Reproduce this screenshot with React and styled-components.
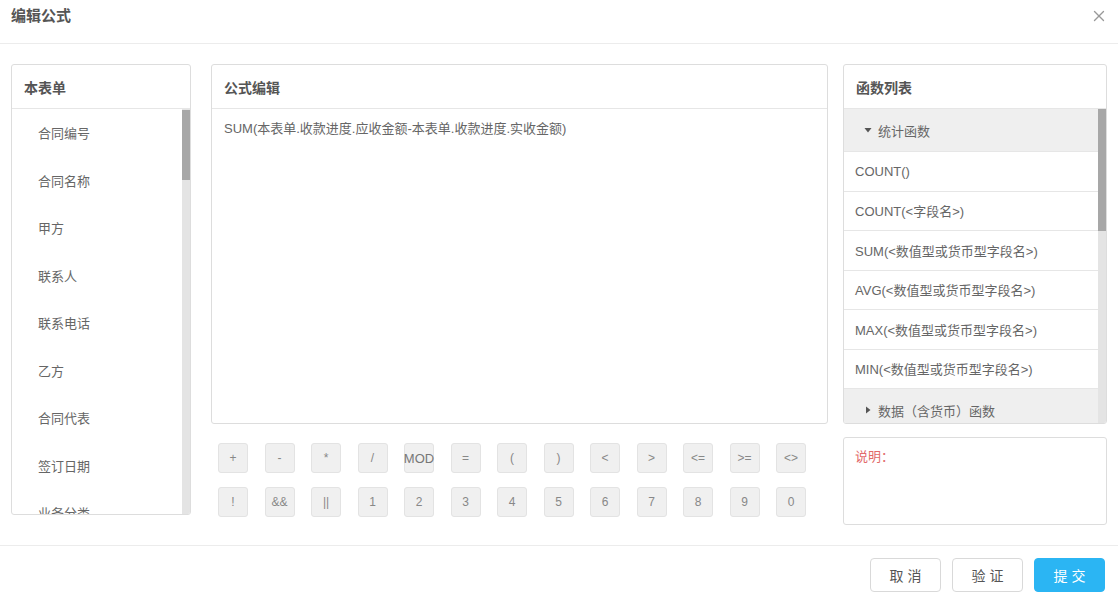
import React from 'react';
import styled, { createGlobalStyle } from 'styled-components';
import { X } from 'lucide-react';

const GlobalStyle = createGlobalStyle`
  html, body {
    margin: 0;
    padding: 0;
    background: #fff;
  }
  body {
    font-family: "Liberation Sans", "Noto Sans CJK SC", sans-serif;
    color: #666;
  }
  * {
    box-sizing: border-box;
  }
`;

const Dialog = styled.div`
  width: 1118px;
  height: 597px;
  display: flex;
  flex-direction: column;
  background: #fff;
  overflow: hidden;
`;

const Header = styled.div`
  height: 44px;
  flex-shrink: 0;
  display: flex;
  justify-content: space-between;
  align-items: flex-start;
  padding: 6px 10px 0 11px;
  border-bottom: 1px solid #ececec;
`;

const Title = styled.h1`
  margin: 0;
  font-size: 15px;
  line-height: 20px;
  font-weight: bold;
  color: #555;
`;

const CloseBtn = styled.button`
  border: none;
  background: none;
  padding: 0;
  margin-top: 1px;
  color: #999;
  cursor: pointer;
  display: flex;
`;

const Body = styled.div`
  flex: 1;
  display: flex;
  gap: 20px;
  padding: 20px 11px 20px 11px;
  border-bottom: 1px solid #ececec;
`;

const Panel = styled.div`
  border: 1px solid #ddd;
  border-radius: 3px;
  background: #fff;
  display: flex;
  flex-direction: column;
  overflow: hidden;
  width: ${p => p.$width || 'auto'};
  height: ${p => p.$height};
  flex-shrink: 0;
`;

const PanelHead = styled.div`
  height: 44px;
  flex-shrink: 0;
  display: flex;
  align-items: center;
  padding: 0 12px;
  font-size: 14px;
  font-weight: bold;
  color: #555;
  border-bottom: 1px solid #e6e6e6;
`;

const ScrollArea = styled.div`
  flex: 1;
  min-height: 0;
  display: flex;
`;

const ListBody = styled.div`
  flex: 1;
  min-width: 0;
  overflow: hidden;
`;

const Track = styled.div`
  width: 8px;
  flex-shrink: 0;
  background: #e4e4e4;
  padding-top: ${p => p.$offset || 0}px;
`;

const Thumb = styled.div`
  width: 100%;
  background: #a7a7a7;
`;

const FieldItem = styled.div`
  height: 47.5px;
  display: flex;
  align-items: center;
  padding-left: 26px;
  font-size: 13px;
  color: #666;
  white-space: nowrap;
`;

const Middle = styled.div`
  width: 617px;
  flex-shrink: 0;
  display: flex;
  flex-direction: column;
  margin-right: -5px;
`;

const FormulaText = styled.div`
  padding: 11px 12px;
  font-size: 13px;
  line-height: 18px;
  color: #666;
`;

const Keypad = styled.div`
  display: grid;
  grid-template-columns: repeat(13, 30px);
  column-gap: 16.5px;
  row-gap: 14px;
  padding: 19px 0 0 7px;
`;

const Key = styled.button`
  width: 30px;
  height: 30px;
  padding: 0;
  border: 1px solid #e3e3e3;
  border-radius: 3px;
  background: #f0f0f0;
  color: ${p => (p.$wide ? '#777' : '#888')};
  font-family: "Liberation Sans", sans-serif;
  font-size: ${p => (p.$wide ? '13px' : '12px')};
  white-space: nowrap;
  overflow: visible;
  display: flex;
  align-items: center;
  justify-content: center;
  cursor: pointer;
`;

const Right = styled.div`
  width: 264px;
  flex-shrink: 0;
  display: flex;
  flex-direction: column;
  gap: 13px;
`;

const GroupHead = styled.div`
  height: 43px;
  display: flex;
  align-items: center;
  gap: 6px;
  padding-left: 20px;
  background: #efefef;
  font-size: 13px;
  color: #666;
  border-bottom: 1px solid #e6e6e6;
`;

const FuncItem = styled.div`
  height: 39.5px;
  display: flex;
  align-items: center;
  padding-left: 11px;
  font-size: 13px;
  color: #666;
  border-bottom: 1px solid #e6e6e6;
  white-space: nowrap;
`;

const Desc = styled.div`
  height: 88px;
  border: 1px solid #ddd;
  border-radius: 3px;
  padding: 8px 11px;
  font-size: 13px;
  color: #e26a6a;
`;

const Footer = styled.div`
  height: 52px;
  flex-shrink: 0;
  display: flex;
  justify-content: flex-end;
  gap: 11px;
  padding: 12px 13px 0 0;
`;

const FootBtn = styled.button`
  width: 71px;
  height: 34px;
  border-radius: 4px;
  border: 1px solid ${p => (p.$primary ? '#2bb5f3' : '#d9d9d9')};
  background: ${p => (p.$primary ? '#2bb5f3' : '#fff')};
  color: ${p => (p.$primary ? '#fff' : '#555')};
  font-family: "Liberation Sans", "Noto Sans CJK SC", sans-serif;
  font-size: 14px;
  letter-spacing: 4px;
  text-indent: 4px;
  cursor: pointer;
`;

function Caret({ open }) {
  return (
    <svg width="8" height="8" viewBox="0 0 8 8">
      {open ? (
        <polygon points="0.5,2 7.5,2 4,6.5" fill="#555" />
      ) : (
        <polygon points="2,0.5 6.5,4 2,7.5" fill="#555" />
      )}
    </svg>
  );
}

const fields = [
  '合同编号', '合同名称', '甲方', '联系人', '联系电话', '乙方', '合同代表', '签订日期', '业务分类',
];

const funcs = [
  'COUNT()',
  'COUNT(<字段名>)',
  'SUM(<数值型或货币型字段名>)',
  'AVG(<数值型或货币型字段名>)',
  'MAX(<数值型或货币型字段名>)',
  'MIN(<数值型或货币型字段名>)',
];

const keys = [
  '+', '-', '*', '/', 'MOD', '=', '(', ')', '<', '>', '<=', '>=', '<>',
  '!', '&&', '||', '1', '2', '3', '4', '5', '6', '7', '8', '9', '0',
];

export default function App() {
  return (
    <Dialog>
      <GlobalStyle />
      <Header>
        <Title>编辑公式</Title>
        <CloseBtn aria-label="关闭">
          <X size={18} strokeWidth={1.8} />
        </CloseBtn>
      </Header>

      <Body>
        <Panel $width="180px" $height="451px">
          <PanelHead>本表单</PanelHead>
          <ScrollArea>
            <ListBody>
              {fields.map(f => (
                <FieldItem key={f}>{f}</FieldItem>
              ))}
            </ListBody>
            <Track $offset={1}>
              <Thumb style={{ height: 70 }} />
            </Track>
          </ScrollArea>
        </Panel>

        <Middle>
          <Panel $height="360px">
            <PanelHead>公式编辑</PanelHead>
            <FormulaText>SUM(本表单.收款进度.应收金额-本表单.收款进度.实收金额)</FormulaText>
          </Panel>
          <Keypad>
            {keys.map(k => (
              <Key key={k} $wide={k === 'MOD'}>{k}</Key>
            ))}
          </Keypad>
        </Middle>

        <Right>
          <Panel $height="360px">
            <PanelHead>函数列表</PanelHead>
            <ScrollArea>
              <ListBody>
                <GroupHead>
                  <Caret open />
                  统计函数
                </GroupHead>
                {funcs.map(f => (
                  <FuncItem key={f}>{f}</FuncItem>
                ))}
                <GroupHead>
                  <Caret />
                  数据（含货币）函数
                </GroupHead>
              </ListBody>
              <Track>
                <Thumb style={{ height: 122 }} />
              </Track>
            </ScrollArea>
          </Panel>
          <Desc>说明：</Desc>
        </Right>
      </Body>

      <Footer>
        <FootBtn>取消</FootBtn>
        <FootBtn>验证</FootBtn>
        <FootBtn $primary>提交</FootBtn>
      </Footer>
    </Dialog>
  );
}
